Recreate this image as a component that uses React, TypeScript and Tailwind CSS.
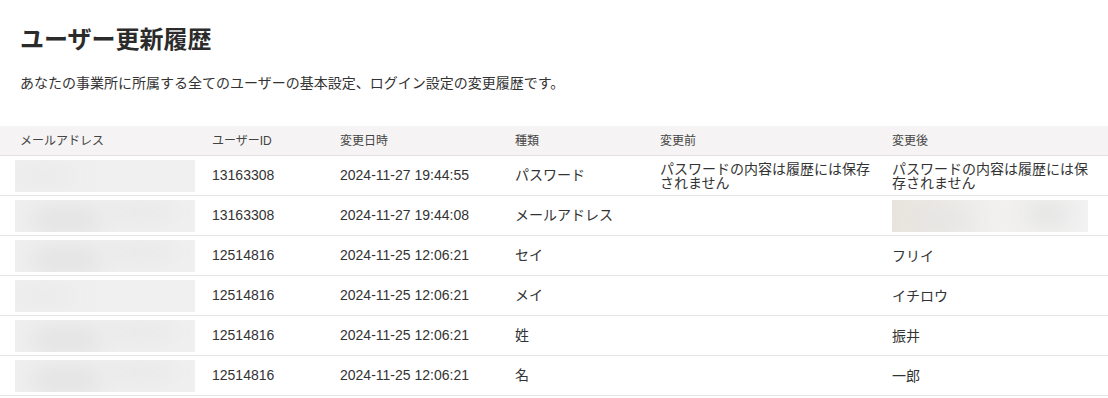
const rows = [
  {
    id: "13163308",
    at: "2024-11-27 19:44:55",
    kind: "パスワード",
    before: "パスワードの内容は履歴には保存されません",
    after: "パスワードの内容は履歴には保存されません",
    blur: "light",
  },
  { id: "13163308", at: "2024-11-27 19:44:08", kind: "メールアドレス", before: "", after: "", blur: "dark", afterBlur: true },
  { id: "12514816", at: "2024-11-25 12:06:21", kind: "セイ", before: "", after: "フリイ", blur: "dark" },
  { id: "12514816", at: "2024-11-25 12:06:21", kind: "メイ", before: "", after: "イチロウ", blur: "light" },
  { id: "12514816", at: "2024-11-25 12:06:21", kind: "姓", before: "", after: "振井", blur: "dark" },
  { id: "12514816", at: "2024-11-25 12:06:21", kind: "名", before: "", after: "一郎", blur: "dark" },
];

const cols = "grid grid-cols-[192px_128px_175px_145px_232px_1fr]";

function EmailBlur({ dark }: { dark: boolean }) {
  return (
    <div className="relative -ml-[5px] h-8 w-[180px] overflow-hidden bg-[#f0f0f0]">
      {dark ? (
        <>
          <div className="absolute left-[15px] top-[10px] h-[20px] w-[70px] rounded-full bg-[#dedede] blur-md" />
          <div className="absolute left-[90px] top-[4px] h-[16px] w-[70px] rounded-full bg-[#e6e6e6] blur-md" />
        </>
      ) : (
        <div className="absolute left-[0px] top-[6px] h-[20px] w-[60px] rounded-full bg-[#e9e9e9] blur-md" />
      )}
    </div>
  );
}

function AfterBlur() {
  return (
    <div className="relative h-8 w-[196px] overflow-hidden bg-gradient-to-r from-[#e9e4dd] via-[#f1f0ee] to-[#f3f3f3]">
      <div className="absolute left-[20px] top-[12px] h-[16px] w-[60px] rounded-full bg-[#e2e2e2] blur-md" />
      <div className="absolute left-[135px] top-[6px] h-[16px] w-[45px] rounded-full bg-[#dcdcdc] blur-md" />
    </div>
  );
}

export default function App() {
  return (
    <div className="min-h-[398px] w-[1108px] bg-white font-['Liberation_Sans','Noto_Sans_CJK_JP',sans-serif] text-[#333]">
      <div className="px-5 pt-6">
        <h1 className="text-[24px] font-bold leading-8 text-[#2b2b2b]">ユーザー更新履歴</h1>
        <p className="mt-[17px] text-[14px] leading-5">
          あなたの事業所に所属する全てのユーザーの基本設定、ログイン設定の変更履歴です。
        </p>
      </div>

      <div className="mt-[33px]">
        <div className={`${cols} h-[30px] items-center border-b border-[#e2e2e2] bg-[#f5f3f3] text-[12px] text-[#444]`}>
          <div className="pl-5">メールアドレス</div>
          <div className="pl-5">ユーザーID</div>
          <div className="pl-5">変更日時</div>
          <div className="pl-5">種類</div>
          <div className="pl-5">変更前</div>
          <div className="pl-5">変更後</div>
        </div>
        {rows.map((r, i) => (
          <div key={i} className={`${cols} h-10 items-center border-b border-[#e5e5e5] text-[14px]`}>
            <div className="pl-5">
              <EmailBlur dark={r.blur === "dark"} />
            </div>
            <div className="pl-5">{r.id}</div>
            <div className="pl-5">{r.at}</div>
            <div className="pl-5">{r.kind}</div>
            <div className="pl-5 leading-[14px]">{r.before}</div>
            <div className="pl-5 pr-5 leading-[14px]">{r.afterBlur ? <AfterBlur /> : r.after}</div>
          </div>
        ))}
      </div>
    </div>
  );
}
